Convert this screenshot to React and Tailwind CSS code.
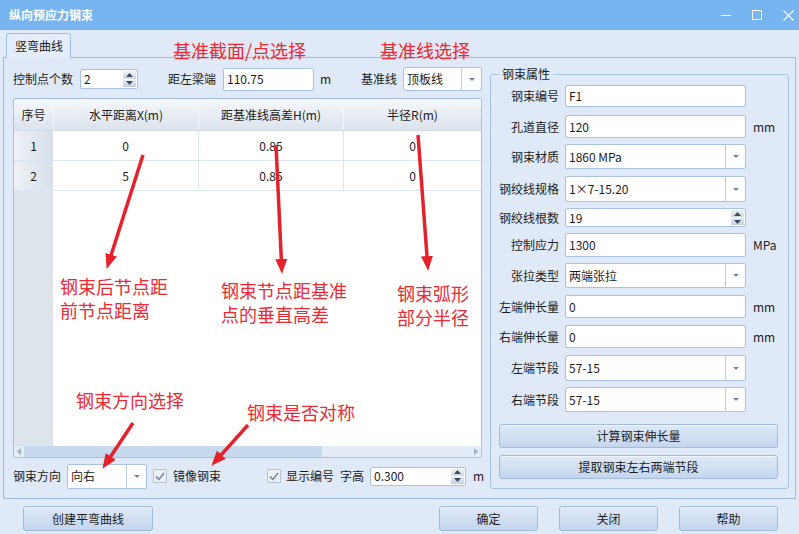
import React from 'react'

function Box({ className = '', children }) {
  return (
    <div className={`shrink-0 flex items-center bg-white border border-[#a9c1e2] rounded-[2px] overflow-hidden ${className}`}>
      {children}
    </div>
  )
}

function TextBox({ value, className = '' }) {
  return (
    <Box className={className}>
      <span className="pl-[3px]">{value}</span>
    </Box>
  )
}

function Combo({ value, className = '' }) {
  return (
    <Box className={className}>
      <span className="flex-1 pl-[3px]">{value}</span>
      <span className="h-full w-[20px] border-l border-[#b9cde7] flex items-center justify-center text-[#6a83a8]">
        <svg width="6" height="3" viewBox="0 0 6 3">
          <path d="M0 0H6L3 3Z" fill="currentColor" />
        </svg>
      </span>
    </Box>
  )
}

function Spin({ value, className = '' }) {
  return (
    <Box className={className}>
      <span className="flex-1 pl-[3px]">{value}</span>
      <span className="h-full w-[15px] flex flex-col p-[1px] gap-[1px]">
        <span className="flex-1 flex items-center justify-center bg-gradient-to-b from-[#eef2f7] to-[#cdd6e3] text-[#3e4c63]">
          <svg width="7" height="4" viewBox="0 0 7 4">
            <path d="M0 4L3.5 0L7 4Z" fill="currentColor" />
          </svg>
        </span>
        <span className="flex-1 flex items-center justify-center bg-gradient-to-b from-[#e3e9f1] to-[#c6d0de] text-[#3e4c63]">
          <svg width="7" height="4" viewBox="0 0 7 4">
            <path d="M0 0H7L3.5 4Z" fill="currentColor" />
          </svg>
        </span>
      </span>
    </Box>
  )
}

function Check() {
  return (
    <span className="shrink-0 w-[14px] h-[14px] border border-[#b7c1ce] bg-[#edf1f6] rounded-[1px] flex items-center justify-center">
      <svg width="10" height="9" viewBox="0 0 10 9">
        <path d="M1 4.5L4 7.5L9 1" stroke="#8391a6" strokeWidth="1.8" fill="none" />
      </svg>
    </span>
  )
}

function Btn({ children, className = '' }) {
  return (
    <div
      className={`shrink-0 flex items-center justify-center border border-[#a2badb] rounded-[3px] bg-gradient-to-b from-[#dfe9f7] to-[#c4d6ee] shadow-[inset_0_1px_0_#f1f6fc] ${className}`}
    >
      {children}
    </div>
  )
}

function Field({ label, unit, mt, children }) {
  return (
    <div className="flex items-center" style={{ marginTop: mt }}>
      <span className="w-[68px] text-right shrink-0">{label}</span>
      <div className="ml-[6px] w-[181px] shrink-0 flex">{children}</div>
      {unit && <span className="ml-[7px] shrink-0">{unit}</span>}
    </div>
  )
}

const rows = [
  { n: 1, x: '0', h: '0.85', r: '0' },
  { n: 2, x: '5', h: '0.85', r: '0' },
]

export default function App() {
  return (
    <div className="relative w-[799px] h-[534px] overflow-hidden whitespace-nowrap bg-[#dfe9f7] font-['Noto_Sans_CJK_SC','Microsoft_YaHei',sans-serif] text-[12px] leading-none text-[#1c1c1c] flex flex-col">
      {/* title bar */}
      <div className="h-[30px] shrink-0 bg-[#77b5f0] flex items-center justify-between pl-[9px] pr-[5px] text-white">
        <span className="font-bold text-[12px]">纵向预应力钢束</span>
        <div className="flex items-center gap-[21px]">
          <svg width="10" height="10" viewBox="0 0 10 10">
            <path d="M0 5.5H10" stroke="white" strokeWidth="1" />
          </svg>
          <svg width="10" height="10" viewBox="0 0 10 10">
            <rect x="0.5" y="0.5" width="9" height="9" stroke="white" fill="none" />
          </svg>
          <svg width="11" height="11" viewBox="0 0 11 11">
            <path d="M0.5 0.5L10.5 10.5M10.5 0.5L0.5 10.5" stroke="white" strokeWidth="1.1" />
          </svg>
        </div>
      </div>

      <div className="flex-1 flex flex-col px-[3px] pt-[3px]">
        {/* tab strip */}
        <div className="h-[24px] flex pl-[3px]">
          <div className="relative z-10 w-[65px] h-[25px] border border-b-0 border-[#a0bce1] rounded-t-[3px] bg-[#e4edf9] flex items-center pl-[8px]">
            竖弯曲线
          </div>
        </div>

        {/* tab panel */}
        <div className="h-[442px] border border-[#9fbbe0] flex items-start pl-[9px]">
          {/* left column */}
          <div className="mt-[9px] w-[469px] shrink-0 flex flex-col">
            <div className="h-[24px] flex items-center">
              <span className="w-[60px] shrink-0">控制点个数</span>
              <Spin value="2" className="ml-[7px] w-[58px] h-[20px]" />
              <span className="ml-[30px] w-[48px] shrink-0">距左梁端</span>
              <TextBox value="110.75" className="ml-[7px] w-[91px] h-[23px]" />
              <span className="ml-[6px] w-[10px] shrink-0">m</span>
              <span className="ml-[31px] w-[36px] shrink-0">基准线</span>
              <Combo value="顶板线" className="ml-[6px] w-[79px] h-[24px]" />
            </div>

            {/* grid */}
            <div className="mt-[7px] h-[360px] border border-[#a6c0e3] rounded-[2px] bg-white flex flex-col overflow-hidden">
              <div className="h-[32px] shrink-0 flex bg-gradient-to-b from-[#f6f8fb] to-[#dbe3ed] border-b border-[#d2dce9]">
                <div className="w-[39px] flex items-center justify-center">序号</div>
                <div className="w-[145px] flex items-center justify-center border-l border-[#f4f7fb]">水平距离X(m)</div>
                <div className="w-[145px] flex items-center justify-center border-l border-[#f4f7fb]">距基准线高差H(m)</div>
                <div className="flex-1 flex items-center justify-center border-l border-[#f4f7fb]">半径R(m)</div>
              </div>
              {rows.map((r) => (
                <div key={r.n} className="h-[30px] shrink-0 flex border-b border-[#d9e5f3]">
                  <div className="w-[39px] flex items-center justify-center bg-gradient-to-r from-[#eef2f7] to-[#d7dfe9]">
                    {r.n}
                  </div>
                  <div className="w-[145px] flex items-center justify-center">{r.x}</div>
                  <div className="w-[145px] flex items-center justify-center border-l border-[#d9e5f3]">{r.h}</div>
                  <div className="flex-1 flex items-center justify-center border-l border-[#d9e5f3]">{r.r}</div>
                </div>
              ))}
              <div className="flex-1 flex">
                <div className="w-[39px] bg-[#dee4ec]" />
                <div className="flex-1" />
              </div>
              <div className="h-[11px] shrink-0 flex items-center bg-[#e4ecf7]">
                <span className="w-[10px] flex justify-center text-[#a3afbf]">
                  <svg width="4" height="7" viewBox="0 0 4 7">
                    <path d="M4 0V7L0 3.5Z" fill="currentColor" />
                  </svg>
                </span>
                <div className="flex-1 h-full flex">
                  <div className="w-[298px] h-full bg-[#c7d9ef]" />
                </div>
                <span className="w-[10px] flex justify-center text-[#a3afbf]">
                  <svg width="4" height="7" viewBox="0 0 4 7">
                    <path d="M0 0V7L4 3.5Z" fill="currentColor" />
                  </svg>
                </span>
              </div>
            </div>

            <div className="mt-[5px] h-[26px] flex items-center">
              <span className="w-[48px] shrink-0">钢束方向</span>
              <Combo value="向右" className="ml-[6px] w-[80px] h-[25px]" />
              <span className="ml-[6px] shrink-0"><Check /></span>
              <span className="ml-[6px] w-[48px] shrink-0">镜像钢束</span>
              <span className="ml-[46px] shrink-0"><Check /></span>
              <span className="ml-[5px] w-[48px] shrink-0">显示编号</span>
              <span className="ml-[6px] w-[24px] shrink-0">字高</span>
              <Spin value="0.300" className="ml-[6px] w-[96px] h-[19px]" />
              <span className="ml-[7px] shrink-0">m</span>
            </div>
          </div>

          {/* property group */}
          <div className="relative ml-[8px] mt-[16px] w-[299px] h-[415px] shrink-0 border border-[#a7c1e3] rounded-[3px] flex flex-col pt-[10px]">
            <span className="absolute -top-[7px] left-[8px] px-[3px] bg-[#dfe9f7]">钢束属性</span>
            <Field label="钢束编号" mt={0}>
              <TextBox value="F1" className="w-full h-[22px]" />
            </Field>
            <Field label="孔道直径" unit="mm" mt={8}>
              <TextBox value="120" className="w-full h-[23px]" />
            </Field>
            <Field label="钢束材质" mt={6}>
              <Combo value="1860 MPa" className="w-full h-[25px]" />
            </Field>
            <Field label="钢绞线规格" mt={7}>
              <Combo value="1×7-15.20" className="w-full h-[26px]" />
            </Field>
            <Field label="钢绞线根数" mt={6}>
              <Spin value="19" className="w-full h-[19px]" />
            </Field>
            <Field label="控制应力" unit="MPa" mt={6}>
              <TextBox value="1300" className="w-full h-[24px]" />
            </Field>
            <Field label="张拉类型" mt={6}>
              <Combo value="两端张拉" className="w-full h-[25px]" />
            </Field>
            <Field label="左端伸长量" unit="mm" mt={7}>
              <TextBox value="0" className="w-full h-[23px]" />
            </Field>
            <Field label="右端伸长量" unit="mm" mt={7}>
              <TextBox value="0" className="w-full h-[23px]" />
            </Field>
            <Field label="左端节段" mt={7}>
              <Combo value="57-15" className="w-full h-[26px]" />
            </Field>
            <Field label="右端节段" mt={6}>
              <Combo value="57-15" className="w-full h-[25px]" />
            </Field>
            <Btn className="ml-[8px] mt-[12px] w-[279px] h-[24px]">计算钢束伸长量</Btn>
            <Btn className="ml-[8px] mt-[7px] w-[279px] h-[24px]">提取钢束左右两端节段</Btn>
          </div>
        </div>

        {/* dialog buttons */}
        <div className="mt-[7px] h-[25px] flex pr-[18px]">
          <Btn className="ml-[20px] w-[130px]">创建平弯曲线</Btn>
          <div className="flex-1" />
          <div className="flex gap-[21px]">
            <Btn className="w-[99px]">确定</Btn>
            <Btn className="w-[99px]">关闭</Btn>
            <Btn className="w-[99px]">帮助</Btn>
          </div>
        </div>
      </div>

      {/* annotation overlay */}
      <div className="absolute inset-0 pointer-events-none text-[18px] text-[#eb2a33]">
        <div className="absolute left-[173px] top-[39px] leading-[22px]">基准截面/点选择</div>
        <div className="absolute left-[380px] top-[39px] leading-[22px]">基准线选择</div>
        <div className="absolute left-[60px] top-[274px] leading-[24px]">
          <div>钢束后节点距</div>
          <div>前节点距离</div>
        </div>
        <div className="absolute left-[221px] top-[278px] leading-[24px]">
          <div>钢束节点距基准</div>
          <div>点的垂直高差</div>
        </div>
        <div className="absolute left-[397px] top-[281px] leading-[24px]">
          <div>钢束弧形</div>
          <div>部分半径</div>
        </div>
        <div className="absolute left-[76px] top-[389px] leading-[22px]">钢束方向选择</div>
        <div className="absolute left-[247px] top-[401px] leading-[22px]">钢束是否对称</div>
        <svg className="absolute inset-0" width="799" height="534" viewBox="0 0 799 534">
          <defs>
            <marker id="ah" markerUnits="userSpaceOnUse" markerWidth="15" markerHeight="12" refX="4" refY="6" orient="auto">
              <path d="M0 0L15 6L0 12Z" fill="#e5222b" />
            </marker>
          </defs>
          <g stroke="#e5222b" strokeWidth="3.5" fill="none" markerEnd="url(#ah)">
            <line x1="143" y1="155" x2="110" y2="258.5" />
            <line x1="276" y1="145" x2="281.5" y2="263" />
            <line x1="418" y1="135" x2="427.3" y2="260" />
            <line x1="133" y1="423" x2="108.5" y2="459.7" />
            <line x1="248" y1="425" x2="218.7" y2="457.6" />
          </g>
        </svg>
      </div>
    </div>
  )
}
